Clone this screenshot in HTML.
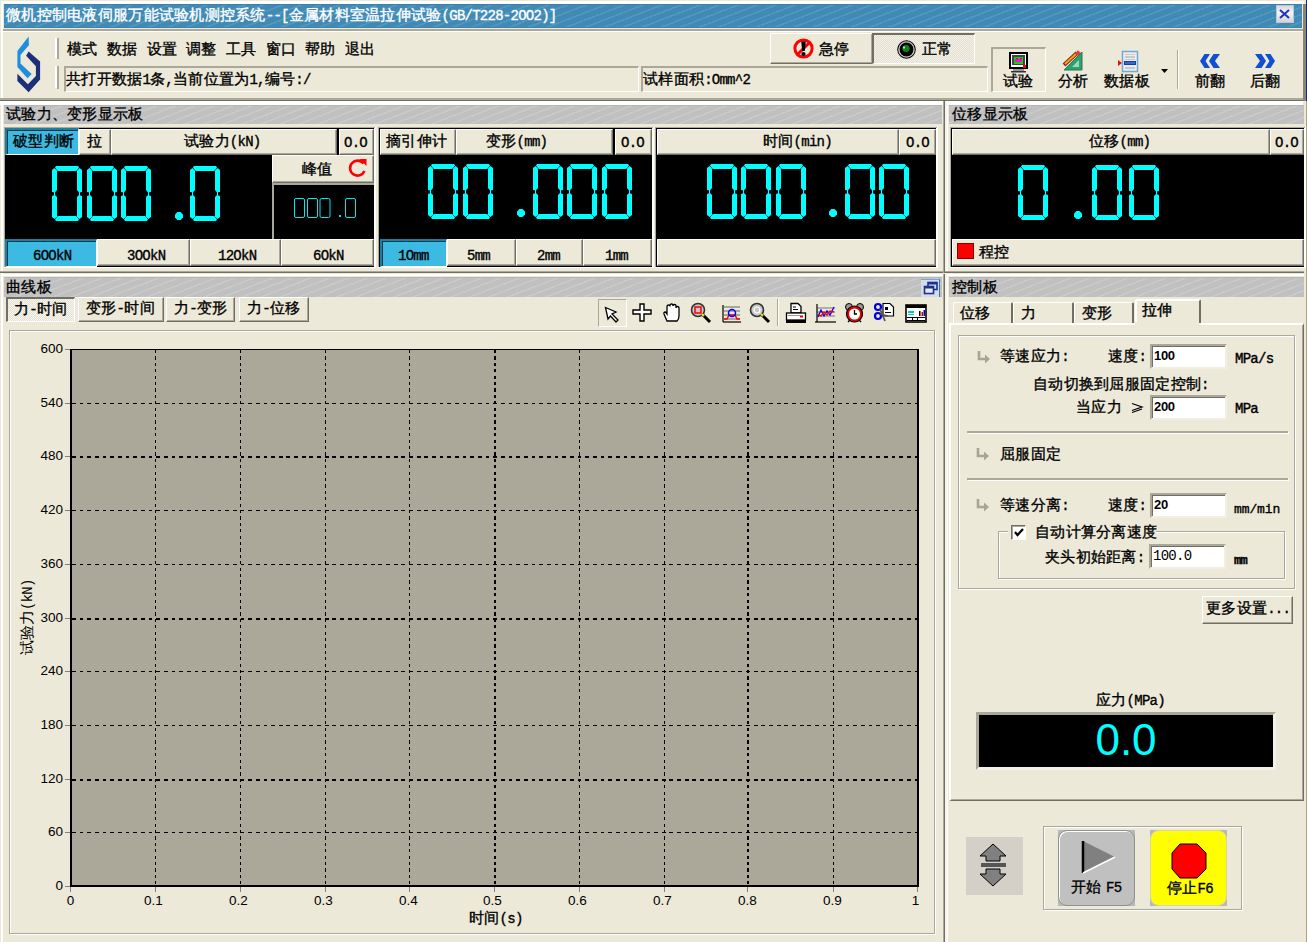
<!DOCTYPE html>
<html><head><meta charset="utf-8">
<style>
*{margin:0;padding:0;box-sizing:border-box}
html,body{width:1307px;height:942px;overflow:hidden;background:#ECE9D8;font-family:"Liberation Sans",sans-serif;font-size:12px;color:#000}
.a{position:absolute}
.t{position:absolute;white-space:nowrap;line-height:12px;font-size:12px}
.raised{background:#ECE9D8;border-top:1px solid #fff;border-left:1px solid #fff;border-right:1px solid #716F64;border-bottom:1px solid #716F64;box-shadow:inset -1px -1px 0 #ACA899}
.sunken{border-top:1px solid #ACA899;border-left:1px solid #ACA899;border-right:1px solid #fff;border-bottom:1px solid #fff}
.hdr{background:repeating-linear-gradient(-21deg,#C0C0C0 0 5.2px,#C9C9C9 5.2px 6.8px);box-shadow:inset 0 1px 0 #B6B6B6}
.blk{background:#000}
.btn{position:absolute;background:#ECE9D8;border-top:1px solid #fff;border-left:1px solid #fff;border-right:1px solid #716F64;border-bottom:1px solid #716F64;box-shadow:inset -1px -1px 0 #ACA899;text-align:center;font-size:12px;white-space:nowrap}
.m{font-family:"Liberation Mono",monospace;font-size:14px;letter-spacing:-0.74px}
.c{font-size:15.3px;line-height:16px;letter-spacing:0.28px;-webkit-text-stroke-width:0.35px}
.sel{background:#3DB6E2;border-top:1px solid #716F64;border-left:1px solid #716F64;border-right:1px solid #fff;border-bottom:1px solid #fff;box-shadow:inset 1px 1px 0 #2E6E8A}
</style></head><body>
<!-- window frame -->
<div class="a" style="left:1px;top:1px;width:1303px;height:941px;border-left:2px solid #fff;border-top:3px solid #fff"></div>
<div class="a" style="left:1306px;top:101px;width:1px;height:841px;background:#A8A490"></div>
<div class="a" style="left:1303px;top:4px;width:3px;height:97px;background:#8A8674"></div>
<div class="a" style="left:1306px;top:0;width:1px;height:101px;background:#1A2A6A"></div>
<!-- title bar -->
<div id="title" class="a" style="left:4px;top:4px;width:1298px;height:24px;background:repeating-linear-gradient(-21deg,#428AB4 0 5.2px,#4D99C1 5.2px 6.8px);box-shadow:inset 0 1px 0 #3A80AA,inset 0 -1px 0 #3C84AE"></div>
<div class="t c" style="left:6px;top:7px;color:#fff;-webkit-text-stroke-width:0.35px">微机控制电液伺服万能试验机测控系统<span class="m">--[</span>金属材料室温拉伸试验<span class="m">(GB/T228-2OO2)]</span></div>
<div class="a" style="left:1276px;top:5px;width:18px;height:18px;background:linear-gradient(#D8D8D8,#F4F4F4 40%,#D4D4D4);border:1px solid #B8C8D8"></div>
<svg class="a" style="left:1279px;top:9px" width="12" height="10"><path d="M1,1 L10,9 M10,1 L1,9" stroke="#2233BB" stroke-width="2"/></svg>
<div class="a" style="left:3px;top:29px;width:1300px;height:2px;background:#ACA899"></div>
<div class="a" style="left:3px;top:31px;width:1300px;height:1px;background:#fff"></div>
<!-- toolbar -->
<svg class="a" style="left:0;top:0" width="60" height="100">
<polygon fill="#1E8FDF" points="28.6,36.6 17.4,50.9 17.4,67 27.5,78.2 31.7,74 20.5,63.5 20.5,55.1 28.9,45.3"/>
<polygon fill="#1B2F7A" points="28.6,51.6 40.1,61.4 40.1,79.6 28.6,92.3 17.4,81 17.4,73.7 27.9,84.2 35.9,76.1 35.9,66.3 26.1,55.8"/>
</svg>
<div class="a" style="left:55px;top:38px;width:2px;height:20px;background:#fff"></div>
<div class="a" style="left:57px;top:38px;width:2px;height:21px;background:#ACA899"></div>
<div class="a" style="left:55px;top:66px;width:2px;height:22px;background:#fff"></div>
<div class="a" style="left:57px;top:66px;width:2px;height:23px;background:#ACA899"></div>
<div class="t c" style="left:67px;top:41px;word-spacing:0">模式</div>
<div class="t c" style="left:107px;top:41px">数据</div>
<div class="t c" style="left:147px;top:41px">设置</div>
<div class="t c" style="left:186px;top:41px">调整</div>
<div class="t c" style="left:226px;top:41px">工具</div>
<div class="t c" style="left:266px;top:41px">窗口</div>
<div class="t c" style="left:305px;top:41px">帮助</div>
<div class="t c" style="left:345px;top:41px">退出</div>
<div class="a" style="left:64px;top:66px;width:575px;height:26px;border-top:2px solid #ACA899;border-left:2px solid #ACA899;border-right:1px solid #fff;border-bottom:1px solid #fff"></div>
<div class="t c" style="left:66px;top:71px">共打开数据<span class="m">1</span>条<span class="m">,</span>当前位置为<span class="m">1,</span>编号<span class="m">:/</span></div>
<div class="a" style="left:641px;top:66px;width:347px;height:26px;border-top:2px solid #ACA899;border-left:2px solid #ACA899;border-right:1px solid #fff;border-bottom:1px solid #fff"></div>
<div class="t c" style="left:643px;top:71px">试样面积<span class="m">:Omm^2</span></div>
<div class="btn" style="left:770px;top:33px;width:103px;height:31px"></div>
<svg class="a" style="left:793px;top:38px" width="21" height="21"><circle cx="10.5" cy="10.5" r="8.6" fill="none" stroke="#F00" stroke-width="3"/><line x1="4.5" y1="16.5" x2="16.5" y2="4.5" stroke="#F00" stroke-width="3"/><path d="M8.2,3.5 H12.8 L11.8,13 H9.2 Z" fill="#000"/><circle cx="10.5" cy="16" r="2.1" fill="#000"/></svg>
<div class="t c" style="left:819px;top:41px">急停</div>
<div class="a" style="left:872px;top:33px;width:103px;height:31px;background:repeating-conic-gradient(#F4F2E8 0 25%,#E2DFD0 0 50%) 0 0/2px 2px;border-top:2px solid #716F64;border-left:2px solid #716F64;border-bottom:1px solid #fff;border-right:1px solid #fff"></div>
<svg class="a" style="left:897px;top:40px" width="20" height="20"><circle cx="9.5" cy="9.5" r="9.3" fill="#000"/><circle cx="9.5" cy="9.5" r="7.6" fill="none" stroke="#C8C8C8" stroke-width="1.4"/><circle cx="9.5" cy="9.5" r="6.6" fill="#000"/><circle cx="9" cy="8.5" r="3.6" fill="#0A8A0A"/><rect x="6" y="6.5" width="2" height="2" fill="#E0C0E0"/></svg>
<div class="t c" style="left:922px;top:41px">正常</div>
<!-- right toolbar -->
<div class="a" style="left:991px;top:47px;width:55px;height:45px;border-top:2px solid #ACA899;border-left:2px solid #ACA899;border-right:1px solid #fff;border-bottom:1px solid #fff"></div>
<svg class="a" style="left:1008px;top:51px" width="22" height="23">
<rect x="1" y="1" width="19" height="17" fill="#000"/><rect x="3" y="3" width="15" height="13" fill="#fff"/><rect x="4" y="4" width="13" height="10" fill="#444"/><rect x="6" y="6" width="9" height="7" fill="#00E000"/><rect x="7" y="8" width="7" height="3" fill="#F0F"/><rect x="8" y="7" width="2" height="1" fill="#E00"/><rect x="12" y="7" width="2" height="1" fill="#E00"/><rect x="15" y="14" width="3" height="3" fill="#F00"/>
<rect x="5" y="18" width="11" height="2" fill="#999"/><rect x="3" y="20" width="15" height="1.5" fill="#333"/></svg>
<div class="t c" style="left:1003px;top:73px">试验</div>
<svg class="a" style="left:1062px;top:50px" width="22" height="22">
<polygon points="20,2 20,20 2,20" fill="#2FA070"/><polygon points="17,10 17,17 10,17" fill="#9ED8B8"/><polygon points="20,2 20,20 2,20" fill="none" stroke="#1E7A50" stroke-width="1"/>
<line x1="2" y1="15" x2="15" y2="3" stroke="#8A2A10" stroke-width="4"/><line x1="3" y1="14" x2="14" y2="4" stroke="#F5A020" stroke-width="2"/><rect x="14" y="1" width="4" height="4" fill="#E04040" transform="rotate(45 16 3)"/></svg>
<div class="t c" style="left:1058px;top:73px">分析</div>
<svg class="a" style="left:1116px;top:50px" width="24" height="23">
<rect x="6.5" y="1.5" width="15" height="20" fill="#F0EEE4" stroke="#6FA8DC" stroke-width="1.5"/>
<rect x="9" y="4" width="10" height="1" fill="#C8C8D0"/><rect x="9" y="6" width="10" height="2" fill="#C8C8D0"/><rect x="9" y="9" width="10" height="1" fill="#C8C8D0"/>
<rect x="8" y="11" width="12" height="4" fill="#1040B0"/><rect x="9" y="12.5" width="10" height="1" fill="#6090E0"/><rect x="9" y="17" width="10" height="2" fill="#C8C8D0"/>
<polygon points="2,10 6,13 2,16" fill="#E01010"/></svg>
<div class="t c" style="left:1104px;top:73px">数据板</div>
<svg class="a" style="left:1160px;top:68px" width="9" height="6"><polygon points="1,1 8,1 4.5,5" fill="#000"/></svg>
<div class="a" style="left:1177px;top:50px;width:1px;height:39px;background:#ACA899"></div>
<div class="a" style="left:1178px;top:50px;width:1px;height:39px;background:#fff"></div>
<svg class="a" style="left:1199px;top:53px" width="22" height="17"><g fill="#1050D0"><polygon points="1,8 5.5,1 11,1 6.5,8 11,15 5.5,15"/><polygon points="10,8 14.5,1 21,1 16,8 21,15 14.5,15"/></g></svg>
<div class="t c" style="left:1195px;top:73px">前翻</div>
<svg class="a" style="left:1254px;top:53px" width="22" height="17"><g fill="#1050D0"><polygon points="21,8 16.5,1 11,1 15.5,8 11,15 16.5,15"/><polygon points="12,8 7.5,1 1,1 6,8 1,15 7.5,15"/></g></svg>
<div class="t c" style="left:1250px;top:73px">后翻</div>
<!-- toolbar bottom line -->
<div class="a" style="left:0;top:98px;width:1303px;height:2px;background:#ACA899"></div>
<div class="a" style="left:0;top:100px;width:1303px;height:1px;background:#716F64"></div>
<div class="a" style="left:0;top:101px;width:1303px;height:4px;background:#fff"></div>

<div class="a" style="left:0px;top:271px;width:943px;height:1px;background:#ACA899;"></div>
<div class="a" style="left:0px;top:272px;width:943px;height:1px;background:#716F64;"></div>
<div class="a" style="left:1px;top:101px;width:1px;height:170px;background:#fff;"></div>
<div class="a" style="left:2px;top:101px;width:1px;height:170px;background:#fff;"></div>
<div class="a" style="left:943px;top:101px;width:1px;height:172px;background:#ACA899;"></div>
<div class="a" style="left:944px;top:101px;width:1px;height:172px;background:#716F64;"></div>
<div class="a" style="left:945px;top:101px;width:2px;height:172px;background:#F6F4EA;"></div>
<div class="a" style="left:947px;top:101px;width:1px;height:172px;background:#fff;"></div>
<div class="a" style="left:945px;top:271px;width:359px;height:1px;background:#ACA899;"></div>
<div class="a" style="left:945px;top:272px;width:359px;height:1px;background:#716F64;"></div>
<div class="a" style="left:1px;top:274px;width:942px;height:2px;background:#fff;"></div>
<div class="a" style="left:945px;top:274px;width:359px;height:2px;background:#fff;"></div>
<div class="a" style="left:1px;top:274px;width:1px;height:668px;background:#fff;"></div>
<div class="a" style="left:2px;top:274px;width:1px;height:668px;background:#fff;"></div>
<div class="a" style="left:943px;top:274px;width:1px;height:668px;background:#ACA899;"></div>
<div class="a" style="left:944px;top:274px;width:1px;height:668px;background:#716F64;"></div>
<div class="a" style="left:945px;top:274px;width:2px;height:668px;background:#F6F4EA;"></div>
<div class="a" style="left:947px;top:274px;width:1px;height:668px;background:#fff;"></div>
<div class="a hdr" style="left:4px;top:105px;width:938px;height:19px"></div>
<div class="t c" style="left:6px;top:106px;">试验力、变形显示板</div>
<div class="a hdr" style="left:949px;top:105px;width:355px;height:19px"></div>
<div class="t c" style="left:952px;top:106px;">位移显示板</div>
<div class="a hdr" style="left:4px;top:277px;width:938px;height:20px"></div>
<div class="t c" style="left:6px;top:279px;">曲线板</div>
<div class="a hdr" style="left:949px;top:277px;width:355px;height:20px"></div>
<div class="t c" style="left:952px;top:279px;">控制板</div>
<div class="a" style="left:4px;top:127px;width:372px;height:141px;background:#fff;"></div>
<div class="a" style="left:4px;top:127px;width:371px;height:1px;background:#ACA899;"></div>
<div class="a" style="left:4px;top:127px;width:1px;height:140px;background:#ACA899;"></div>
<div class="a" style="left:5px;top:128px;width:369px;height:139px;background:#000;"></div>
<div class="a" style="left:5px;top:128px;width:74px;height:27px;background:#3CBAE2;border-top:2px solid #1E7EA0;border-left:2px solid #1E7EA0;border-bottom:1px solid #fff;border-right:1px solid #fff;box-shadow:inset 1px 1px 0 #0E3A4E"></div>
<div class="t c" style="left:13px;top:133px;">破型判断</div>
<div class="btn" style="left:79px;top:129px;width:32px;height:26px;"></div>
<div class="t c" style="left:87px;top:133px;">拉</div>
<div class="btn" style="left:111px;top:129px;width:226px;height:26px;"></div>
<div class="t c" style="left:184px;top:133px;">试验力<span class="m">(kN)</span></div>
<div class="btn" style="left:339px;top:129px;width:35px;height:26px;"></div>
<div class="t c" style="left:344px;top:134px;"><span class="m">O.O</span></div>
<div class="btn" style="left:272px;top:155px;width:102px;height:28px;"></div>
<div class="t c" style="left:302px;top:161px;">峰值</div>
<svg class="a" style="left:347px;top:157px" width="22" height="22"><path d="M16.5,6.5 A7.5,7.5 0 1 0 17.5,14" fill="none" stroke="#F00" stroke-width="2.6"/><polygon points="12.5,2 19.5,2 19.5,9" fill="#F00"/></svg>
<div class="a" style="left:272px;top:183px;width:102px;height:56px;background:#ACA899;"></div>
<div class="a" style="left:274px;top:185px;width:100px;height:54px;background:#000;"></div>
<svg class="a" style="left:290px;top:198px" width="70" height="22"><rect x="4.5" y="0.5" width="10" height="19" rx="1.5" fill="none" stroke="#00E8F0" stroke-width="1"/><rect x="17.5" y="0.5" width="10" height="19" rx="1.5" fill="none" stroke="#00E8F0" stroke-width="1"/><rect x="30.0" y="0.5" width="10" height="19" rx="1.5" fill="none" stroke="#00E8F0" stroke-width="1"/><rect x="55.5" y="0.5" width="10" height="19" rx="1.5" fill="none" stroke="#00E8F0" stroke-width="1"/><rect x="49" y="17" width="2" height="2" fill="#00E8F0"/></svg>
<svg class="a" style="left:52px;top:166px" width="169" height="56" fill="#00FFFF" stroke="#000" stroke-width="0.9" paint-order="stroke"><polygon transform="translate(0,0)" points="4,0 26,0 27,1.5 25,5 5,5 3,1.5"/><polygon transform="translate(0,0)" points="5,50 25,50 27,53.5 26,55 4,55 3,53.5"/><polygon transform="translate(0,0)" points="0,4 2.5,2 5,4.5 5,24 3,26.5 0,26"/><polygon transform="translate(0,0)" points="0,30 3,29 5,31 5,51 2.5,53 0,51"/><polygon transform="translate(0,0)" points="30,4 27.5,2 25,4.5 25,24 27,26.5 30,26"/><polygon transform="translate(0,0)" points="30,30 27,29 25,31 25,51 27.5,53 30,51"/><rect x="2" y="25" width="1" height="6" stroke="none"/><rect x="27" y="25" width="1" height="6" stroke="none"/><polygon transform="translate(35,0)" points="4,0 26,0 27,1.5 25,5 5,5 3,1.5"/><polygon transform="translate(35,0)" points="5,50 25,50 27,53.5 26,55 4,55 3,53.5"/><polygon transform="translate(35,0)" points="0,4 2.5,2 5,4.5 5,24 3,26.5 0,26"/><polygon transform="translate(35,0)" points="0,30 3,29 5,31 5,51 2.5,53 0,51"/><polygon transform="translate(35,0)" points="30,4 27.5,2 25,4.5 25,24 27,26.5 30,26"/><polygon transform="translate(35,0)" points="30,30 27,29 25,31 25,51 27.5,53 30,51"/><rect x="37" y="25" width="1" height="6" stroke="none"/><rect x="62" y="25" width="1" height="6" stroke="none"/><polygon transform="translate(69,0)" points="4,0 26,0 27,1.5 25,5 5,5 3,1.5"/><polygon transform="translate(69,0)" points="5,50 25,50 27,53.5 26,55 4,55 3,53.5"/><polygon transform="translate(69,0)" points="0,4 2.5,2 5,4.5 5,24 3,26.5 0,26"/><polygon transform="translate(69,0)" points="0,30 3,29 5,31 5,51 2.5,53 0,51"/><polygon transform="translate(69,0)" points="30,4 27.5,2 25,4.5 25,24 27,26.5 30,26"/><polygon transform="translate(69,0)" points="30,30 27,29 25,31 25,51 27.5,53 30,51"/><rect x="71" y="25" width="1" height="6" stroke="none"/><rect x="96" y="25" width="1" height="6" stroke="none"/><polygon transform="translate(138,0)" points="4,0 26,0 27,1.5 25,5 5,5 3,1.5"/><polygon transform="translate(138,0)" points="5,50 25,50 27,53.5 26,55 4,55 3,53.5"/><polygon transform="translate(138,0)" points="0,4 2.5,2 5,4.5 5,24 3,26.5 0,26"/><polygon transform="translate(138,0)" points="0,30 3,29 5,31 5,51 2.5,53 0,51"/><polygon transform="translate(138,0)" points="30,4 27.5,2 25,4.5 25,24 27,26.5 30,26"/><polygon transform="translate(138,0)" points="30,30 27,29 25,31 25,51 27.5,53 30,51"/><rect x="140" y="25" width="1" height="6" stroke="none"/><rect x="165" y="25" width="1" height="6" stroke="none"/><polygon points="125.5,46 128.5,46 131,48.5 131,51.5 128.5,54 125.5,54 123,51.5 123,48.5"/></svg>
<div class="a" style="left:5px;top:239px;width:92px;height:28px;background:#3CBAE2;border-top:2px solid #1E7EA0;border-left:2px solid #1E7EA0;border-bottom:1px solid #fff;border-right:1px solid #fff;box-shadow:inset 1px 1px 0 #0E3A4E"></div>
<div class="t c" style="left:33px;top:247px;"><span class="m">6OOkN</span></div>
<div class="btn" style="left:97px;top:239px;width:93px;height:27px;"></div>
<div class="t c" style="left:127px;top:247px;"><span class="m">3OOkN</span></div>
<div class="btn" style="left:190px;top:239px;width:91px;height:27px;"></div>
<div class="t c" style="left:218px;top:247px;"><span class="m">12OkN</span></div>
<div class="btn" style="left:281px;top:239px;width:93px;height:27px;"></div>
<div class="t c" style="left:313px;top:247px;"><span class="m">6OkN</span></div>
<div class="a" style="left:378px;top:127px;width:276px;height:141px;background:#fff;"></div>
<div class="a" style="left:378px;top:127px;width:275px;height:1px;background:#ACA899;"></div>
<div class="a" style="left:378px;top:127px;width:1px;height:140px;background:#ACA899;"></div>
<div class="a" style="left:379px;top:128px;width:273px;height:139px;background:#000;"></div>
<div class="btn" style="left:380px;top:129px;width:76px;height:26px;"></div>
<div class="t c" style="left:386px;top:133px;">摘引伸计</div>
<div class="btn" style="left:456px;top:129px;width:157px;height:26px;"></div>
<div class="t c" style="left:486px;top:133px;">变形<span class="m">(mm)</span></div>
<div class="btn" style="left:615px;top:129px;width:37px;height:26px;"></div>
<div class="t c" style="left:621px;top:134px;"><span class="m">O.O</span></div>
<svg class="a" style="left:428px;top:164px" width="205" height="56" fill="#00FFFF" stroke="#000" stroke-width="0.9" paint-order="stroke"><polygon transform="translate(0,0)" points="4,0 26,0 27,1.5 25,5 5,5 3,1.5"/><polygon transform="translate(0,0)" points="5,50 25,50 27,53.5 26,55 4,55 3,53.5"/><polygon transform="translate(0,0)" points="0,4 2.5,2 5,4.5 5,24 3,26.5 0,26"/><polygon transform="translate(0,0)" points="0,30 3,29 5,31 5,51 2.5,53 0,51"/><polygon transform="translate(0,0)" points="30,4 27.5,2 25,4.5 25,24 27,26.5 30,26"/><polygon transform="translate(0,0)" points="30,30 27,29 25,31 25,51 27.5,53 30,51"/><rect x="2" y="25" width="1" height="6" stroke="none"/><rect x="27" y="25" width="1" height="6" stroke="none"/><polygon transform="translate(35,0)" points="4,0 26,0 27,1.5 25,5 5,5 3,1.5"/><polygon transform="translate(35,0)" points="5,50 25,50 27,53.5 26,55 4,55 3,53.5"/><polygon transform="translate(35,0)" points="0,4 2.5,2 5,4.5 5,24 3,26.5 0,26"/><polygon transform="translate(35,0)" points="0,30 3,29 5,31 5,51 2.5,53 0,51"/><polygon transform="translate(35,0)" points="30,4 27.5,2 25,4.5 25,24 27,26.5 30,26"/><polygon transform="translate(35,0)" points="30,30 27,29 25,31 25,51 27.5,53 30,51"/><rect x="37" y="25" width="1" height="6" stroke="none"/><rect x="62" y="25" width="1" height="6" stroke="none"/><polygon transform="translate(105,0)" points="4,0 26,0 27,1.5 25,5 5,5 3,1.5"/><polygon transform="translate(105,0)" points="5,50 25,50 27,53.5 26,55 4,55 3,53.5"/><polygon transform="translate(105,0)" points="0,4 2.5,2 5,4.5 5,24 3,26.5 0,26"/><polygon transform="translate(105,0)" points="0,30 3,29 5,31 5,51 2.5,53 0,51"/><polygon transform="translate(105,0)" points="30,4 27.5,2 25,4.5 25,24 27,26.5 30,26"/><polygon transform="translate(105,0)" points="30,30 27,29 25,31 25,51 27.5,53 30,51"/><rect x="107" y="25" width="1" height="6" stroke="none"/><rect x="132" y="25" width="1" height="6" stroke="none"/><polygon transform="translate(139,0)" points="4,0 26,0 27,1.5 25,5 5,5 3,1.5"/><polygon transform="translate(139,0)" points="5,50 25,50 27,53.5 26,55 4,55 3,53.5"/><polygon transform="translate(139,0)" points="0,4 2.5,2 5,4.5 5,24 3,26.5 0,26"/><polygon transform="translate(139,0)" points="0,30 3,29 5,31 5,51 2.5,53 0,51"/><polygon transform="translate(139,0)" points="30,4 27.5,2 25,4.5 25,24 27,26.5 30,26"/><polygon transform="translate(139,0)" points="30,30 27,29 25,31 25,51 27.5,53 30,51"/><rect x="141" y="25" width="1" height="6" stroke="none"/><rect x="166" y="25" width="1" height="6" stroke="none"/><polygon transform="translate(174,0)" points="4,0 26,0 27,1.5 25,5 5,5 3,1.5"/><polygon transform="translate(174,0)" points="5,50 25,50 27,53.5 26,55 4,55 3,53.5"/><polygon transform="translate(174,0)" points="0,4 2.5,2 5,4.5 5,24 3,26.5 0,26"/><polygon transform="translate(174,0)" points="0,30 3,29 5,31 5,51 2.5,53 0,51"/><polygon transform="translate(174,0)" points="30,4 27.5,2 25,4.5 25,24 27,26.5 30,26"/><polygon transform="translate(174,0)" points="30,30 27,29 25,31 25,51 27.5,53 30,51"/><rect x="176" y="25" width="1" height="6" stroke="none"/><rect x="201" y="25" width="1" height="6" stroke="none"/><polygon points="91.5,45 94.5,45 97,47.5 97,50.5 94.5,53 91.5,53 89,50.5 89,47.5"/></svg>
<div class="a" style="left:380px;top:239px;width:67px;height:28px;background:#3CBAE2;border-top:2px solid #1E7EA0;border-left:2px solid #1E7EA0;border-bottom:1px solid #fff;border-right:1px solid #fff;box-shadow:inset 1px 1px 0 #0E3A4E"></div>
<div class="t c" style="left:398px;top:247px;"><span class="m">1Omm</span></div>
<div class="btn" style="left:447px;top:239px;width:69px;height:27px;"></div>
<div class="t c" style="left:467px;top:247px;"><span class="m">5mm</span></div>
<div class="btn" style="left:516px;top:239px;width:67px;height:27px;"></div>
<div class="t c" style="left:537px;top:247px;"><span class="m">2mm</span></div>
<div class="btn" style="left:583px;top:239px;width:69px;height:27px;"></div>
<div class="t c" style="left:605px;top:247px;"><span class="m">1mm</span></div>
<div class="a" style="left:655px;top:127px;width:283px;height:141px;background:#fff;"></div>
<div class="a" style="left:655px;top:127px;width:282px;height:1px;background:#ACA899;"></div>
<div class="a" style="left:655px;top:127px;width:1px;height:140px;background:#ACA899;"></div>
<div class="a" style="left:656px;top:128px;width:280px;height:139px;background:#000;"></div>
<div class="btn" style="left:657px;top:129px;width:242px;height:26px;"></div>
<div class="t c" style="left:763px;top:133px;">时间<span class="m">(min)</span></div>
<div class="btn" style="left:899px;top:129px;width:37px;height:26px;"></div>
<div class="t c" style="left:906px;top:134px;"><span class="m">O.O</span></div>
<svg class="a" style="left:707px;top:164px" width="203" height="56" fill="#00FFFF" stroke="#000" stroke-width="0.9" paint-order="stroke"><polygon transform="translate(0,0)" points="4,0 26,0 27,1.5 25,5 5,5 3,1.5"/><polygon transform="translate(0,0)" points="5,50 25,50 27,53.5 26,55 4,55 3,53.5"/><polygon transform="translate(0,0)" points="0,4 2.5,2 5,4.5 5,24 3,26.5 0,26"/><polygon transform="translate(0,0)" points="0,30 3,29 5,31 5,51 2.5,53 0,51"/><polygon transform="translate(0,0)" points="30,4 27.5,2 25,4.5 25,24 27,26.5 30,26"/><polygon transform="translate(0,0)" points="30,30 27,29 25,31 25,51 27.5,53 30,51"/><rect x="2" y="25" width="1" height="6" stroke="none"/><rect x="27" y="25" width="1" height="6" stroke="none"/><polygon transform="translate(34,0)" points="4,0 26,0 27,1.5 25,5 5,5 3,1.5"/><polygon transform="translate(34,0)" points="5,50 25,50 27,53.5 26,55 4,55 3,53.5"/><polygon transform="translate(34,0)" points="0,4 2.5,2 5,4.5 5,24 3,26.5 0,26"/><polygon transform="translate(34,0)" points="0,30 3,29 5,31 5,51 2.5,53 0,51"/><polygon transform="translate(34,0)" points="30,4 27.5,2 25,4.5 25,24 27,26.5 30,26"/><polygon transform="translate(34,0)" points="30,30 27,29 25,31 25,51 27.5,53 30,51"/><rect x="36" y="25" width="1" height="6" stroke="none"/><rect x="61" y="25" width="1" height="6" stroke="none"/><polygon transform="translate(69,0)" points="4,0 26,0 27,1.5 25,5 5,5 3,1.5"/><polygon transform="translate(69,0)" points="5,50 25,50 27,53.5 26,55 4,55 3,53.5"/><polygon transform="translate(69,0)" points="0,4 2.5,2 5,4.5 5,24 3,26.5 0,26"/><polygon transform="translate(69,0)" points="0,30 3,29 5,31 5,51 2.5,53 0,51"/><polygon transform="translate(69,0)" points="30,4 27.5,2 25,4.5 25,24 27,26.5 30,26"/><polygon transform="translate(69,0)" points="30,30 27,29 25,31 25,51 27.5,53 30,51"/><rect x="71" y="25" width="1" height="6" stroke="none"/><rect x="96" y="25" width="1" height="6" stroke="none"/><polygon transform="translate(138,0)" points="4,0 26,0 27,1.5 25,5 5,5 3,1.5"/><polygon transform="translate(138,0)" points="5,50 25,50 27,53.5 26,55 4,55 3,53.5"/><polygon transform="translate(138,0)" points="0,4 2.5,2 5,4.5 5,24 3,26.5 0,26"/><polygon transform="translate(138,0)" points="0,30 3,29 5,31 5,51 2.5,53 0,51"/><polygon transform="translate(138,0)" points="30,4 27.5,2 25,4.5 25,24 27,26.5 30,26"/><polygon transform="translate(138,0)" points="30,30 27,29 25,31 25,51 27.5,53 30,51"/><rect x="140" y="25" width="1" height="6" stroke="none"/><rect x="165" y="25" width="1" height="6" stroke="none"/><polygon transform="translate(172,0)" points="4,0 26,0 27,1.5 25,5 5,5 3,1.5"/><polygon transform="translate(172,0)" points="5,50 25,50 27,53.5 26,55 4,55 3,53.5"/><polygon transform="translate(172,0)" points="0,4 2.5,2 5,4.5 5,24 3,26.5 0,26"/><polygon transform="translate(172,0)" points="0,30 3,29 5,31 5,51 2.5,53 0,51"/><polygon transform="translate(172,0)" points="30,4 27.5,2 25,4.5 25,24 27,26.5 30,26"/><polygon transform="translate(172,0)" points="30,30 27,29 25,31 25,51 27.5,53 30,51"/><rect x="174" y="25" width="1" height="6" stroke="none"/><rect x="199" y="25" width="1" height="6" stroke="none"/><polygon points="124.5,45 127.5,45 130,47.5 130,50.5 127.5,53 124.5,53 122,50.5 122,47.5"/></svg>
<div class="btn" style="left:657px;top:239px;width:279px;height:27px;"></div>
<div class="a" style="left:950px;top:127px;width:356px;height:141px;background:#fff;"></div>
<div class="a" style="left:950px;top:127px;width:355px;height:1px;background:#ACA899;"></div>
<div class="a" style="left:950px;top:127px;width:1px;height:140px;background:#ACA899;"></div>
<div class="a" style="left:951px;top:128px;width:353px;height:139px;background:#000;"></div>
<div class="btn" style="left:952px;top:129px;width:318px;height:26px;"></div>
<div class="t c" style="left:1089px;top:133px;">位移<span class="m">(mm)</span></div>
<div class="btn" style="left:1270px;top:129px;width:34px;height:26px;"></div>
<div class="t c" style="left:1275px;top:134px;"><span class="m">O.O</span></div>
<svg class="a" style="left:1018px;top:165px" width="142" height="56" fill="#00FFFF" stroke="#000" stroke-width="0.9" paint-order="stroke"><polygon transform="translate(0,0)" points="4,0 26,0 27,1.5 25,5 5,5 3,1.5"/><polygon transform="translate(0,0)" points="5,50 25,50 27,53.5 26,55 4,55 3,53.5"/><polygon transform="translate(0,0)" points="0,4 2.5,2 5,4.5 5,24 3,26.5 0,26"/><polygon transform="translate(0,0)" points="0,30 3,29 5,31 5,51 2.5,53 0,51"/><polygon transform="translate(0,0)" points="30,4 27.5,2 25,4.5 25,24 27,26.5 30,26"/><polygon transform="translate(0,0)" points="30,30 27,29 25,31 25,51 27.5,53 30,51"/><rect x="2" y="25" width="1" height="6" stroke="none"/><rect x="27" y="25" width="1" height="6" stroke="none"/><polygon transform="translate(74,0)" points="4,0 26,0 27,1.5 25,5 5,5 3,1.5"/><polygon transform="translate(74,0)" points="5,50 25,50 27,53.5 26,55 4,55 3,53.5"/><polygon transform="translate(74,0)" points="0,4 2.5,2 5,4.5 5,24 3,26.5 0,26"/><polygon transform="translate(74,0)" points="0,30 3,29 5,31 5,51 2.5,53 0,51"/><polygon transform="translate(74,0)" points="30,4 27.5,2 25,4.5 25,24 27,26.5 30,26"/><polygon transform="translate(74,0)" points="30,30 27,29 25,31 25,51 27.5,53 30,51"/><rect x="76" y="25" width="1" height="6" stroke="none"/><rect x="101" y="25" width="1" height="6" stroke="none"/><polygon transform="translate(111,0)" points="4,0 26,0 27,1.5 25,5 5,5 3,1.5"/><polygon transform="translate(111,0)" points="5,50 25,50 27,53.5 26,55 4,55 3,53.5"/><polygon transform="translate(111,0)" points="0,4 2.5,2 5,4.5 5,24 3,26.5 0,26"/><polygon transform="translate(111,0)" points="0,30 3,29 5,31 5,51 2.5,53 0,51"/><polygon transform="translate(111,0)" points="30,4 27.5,2 25,4.5 25,24 27,26.5 30,26"/><polygon transform="translate(111,0)" points="30,30 27,29 25,31 25,51 27.5,53 30,51"/><rect x="113" y="25" width="1" height="6" stroke="none"/><rect x="138" y="25" width="1" height="6" stroke="none"/><polygon points="58.5,46 61.5,46 64,48.5 64,51.5 61.5,54 58.5,54 56,51.5 56,48.5"/></svg>
<div class="btn" style="left:952px;top:239px;width:352px;height:27px;"></div>
<div class="a" style="left:957px;top:243px;width:17px;height:16px;background:#F00;border:1px solid #800"></div>
<div class="t c" style="left:979px;top:244px;">程控</div>
<div class="a" style="left:6px;top:297px;width:69px;height:25px;background:repeating-conic-gradient(#F8F6EE 0 25%,#E4E1D2 0 50%) 0 0/2px 2px;border-top:2px solid #716F64;border-left:2px solid #716F64;border-bottom:1px solid #fff;border-right:1px solid #fff"></div>
<div class="t c" style="left:14px;top:301px;">力<span class="m">-</span>时间</div>
<div class="btn" style="left:78px;top:297px;width:86px;height:25px;"></div>
<div class="t c" style="left:86px;top:300px;">变形<span class="m">-</span>时间</div>
<div class="btn" style="left:166px;top:297px;width:69px;height:25px;"></div>
<div class="t c" style="left:174px;top:300px;">力<span class="m">-</span>变形</div>
<div class="btn" style="left:239px;top:297px;width:70px;height:25px;"></div>
<div class="t c" style="left:247px;top:300px;">力<span class="m">-</span>位移</div>
<div class="a" style="left:598px;top:299px;width:29px;height:28px;border-top:1px solid #ACA899;border-left:1px solid #ACA899;border-bottom:1px solid #fff;border-right:1px solid #fff"></div>
<svg class="a" style="left:604px;top:306px" width="20" height="18"><polygon points="1.5,1.5 12,6 8,8 14,14 12,16 6.5,10 4,13" fill="#fff" stroke="#000" stroke-width="1.3"/></svg>
<svg class="a" style="left:631px;top:303px" width="22" height="20"><path d="M9,1 H13 V7 H20 V11 H13 V18 H9 V11 H2 V7 H9 Z" fill="#fff" stroke="#000" stroke-width="1.4"/></svg>
<svg class="a" style="left:662px;top:303px" width="20" height="20"><path d="M5,18 L2,11 Q1.5,9 3.5,9 L5,11 V3.5 Q5,2 6.5,2 Q8,2 8,3.5 V2.5 Q8,1 9.5,1 Q11,1 11,2.5 V3 Q11,1.5 12.5,1.5 Q14,1.5 14,3 V5 Q14,3.5 15.5,3.5 Q17,3.5 17,5 V13 Q17,16 15,18 Z" fill="#fff" stroke="#000" stroke-width="1.3"/></svg>
<svg class="a" style="left:690px;top:302px" width="23" height="22"><circle cx="8" cy="8" r="6.5" fill="#C8C8C8" stroke="#333" stroke-width="1.6"/><rect x="5" y="5" width="6" height="6" fill="none" stroke="#F00" stroke-width="1.5"/><line x1="13" y1="13" x2="20" y2="20" stroke="#000" stroke-width="3"/><line x1="12" y1="12" x2="14" y2="14" stroke="#EE0" stroke-width="2"/></svg>
<svg class="a" style="left:720px;top:303px" width="22" height="21"><g stroke="#777" stroke-width="1.2"><line x1="4" y1="4" x2="20" y2="4"/><line x1="4" y1="8" x2="20" y2="8"/><line x1="4" y1="12" x2="20" y2="12"/><line x1="4" y1="16" x2="20" y2="16"/></g><line x1="3" y1="2" x2="3" y2="19" stroke="#000" stroke-width="1.2"/><line x1="3" y1="19" x2="21" y2="19" stroke="#000" stroke-width="1.2"/><path d="M4,16 H7 L9,12 H15 L17,16 H20" fill="none" stroke="#F00" stroke-width="1.5"/><circle cx="12" cy="10" r="3.5" fill="none" stroke="#00F" stroke-width="1.5"/></svg>
<svg class="a" style="left:749px;top:302px" width="23" height="22"><circle cx="8" cy="8" r="6.5" fill="#C8C8C8" stroke="#333" stroke-width="1.6"/><circle cx="8" cy="8" r="3" fill="none" stroke="#fff" stroke-width="1.2"/><line x1="13" y1="13" x2="20" y2="20" stroke="#000" stroke-width="3"/><line x1="12" y1="12" x2="14" y2="14" stroke="#EE0" stroke-width="2"/></svg>
<div class="a" style="left:777px;top:299px;width:1px;height:27px;background:#ACA899;"></div>
<div class="a" style="left:778px;top:299px;width:1px;height:27px;background:#fff;"></div>
<svg class="a" style="left:785px;top:302px" width="23" height="22"><path d="M6,1.5 H13 L16,4.5 V11 H6 Z" fill="#fff" stroke="#000" stroke-width="1.3"/><line x1="8" y1="5" x2="11" y2="5" stroke="#000"/><line x1="8" y1="7.5" x2="13" y2="7.5" stroke="#000"/><rect x="1.5" y="11" width="19" height="7" fill="#fff" stroke="#000" stroke-width="1.3"/><rect x="3" y="13" width="15" height="1" fill="#999"/><rect x="15" y="14" width="3" height="1.5" fill="#E00"/><rect x="1" y="18" width="20" height="3" fill="#000"/></svg>
<svg class="a" style="left:814px;top:303px" width="23" height="21"><g stroke="#888" stroke-width="1.2"><line x1="3" y1="5" x2="21" y2="5"/><line x1="3" y1="9" x2="21" y2="9"/><line x1="3" y1="13" x2="21" y2="13"/></g><line x1="3" y1="1" x2="3" y2="19" stroke="#000" stroke-width="1.2"/><line x1="1" y1="19" x2="22" y2="19" stroke="#000" stroke-width="1.2"/><polyline points="4,14 7,7 10,13 13,8 16,12 20,4" fill="none" stroke="#00F" stroke-width="1.3"/><polyline points="4,11 7,13 10,9 13,12 16,8 20,9" fill="none" stroke="#F00" stroke-width="1.3"/></svg>
<svg class="a" style="left:844px;top:302px" width="22" height="22"><circle cx="5" cy="5" r="3.5" fill="#999" stroke="#000"/><circle cx="16" cy="5" r="3.5" fill="#999" stroke="#000"/><circle cx="10.5" cy="12" r="8" fill="#E00" stroke="#000" stroke-width="1.2"/><circle cx="10.5" cy="12" r="5.5" fill="#fff"/><path d="M10.5,8 V12 H13" stroke="#000" stroke-width="1.3" fill="none"/><line x1="4" y1="20" x2="6" y2="18" stroke="#000" stroke-width="1.5"/><line x1="17" y1="20" x2="15" y2="18" stroke="#000" stroke-width="1.5"/></svg>
<svg class="a" style="left:873px;top:302px" width="22" height="22"><path d="M10,1.5 H17 L20.5,5 V14 H10 Z" fill="#fff" stroke="#000" stroke-width="1.2"/><rect x="12" y="5" width="3" height="3" fill="#000"/><rect x="12" y="10" width="6" height="1" fill="#000"/><circle cx="5" cy="5" r="3" fill="none" stroke="#0000E0" stroke-width="2.2"/><circle cx="5" cy="14" r="3" fill="none" stroke="#0000E0" stroke-width="2.2"/><line x1="7" y1="7" x2="12" y2="19" stroke="#555" stroke-width="1.8"/><line x1="7" y1="12" x2="15" y2="14" stroke="#555" stroke-width="1.8"/></svg>
<svg class="a" style="left:905px;top:304px" width="22" height="19"><rect x="1" y="1" width="20" height="17" fill="#fff" stroke="#000" stroke-width="1.6"/><rect x="1" y="1" width="20" height="3" fill="#000"/><rect x="3" y="7" width="6" height="2" fill="#0CC"/><rect x="3" y="10" width="6" height="1" fill="#0CC"/><rect x="14" y="7" width="1.5" height="5" fill="#000"/><rect x="16.5" y="8" width="1.5" height="4" fill="#D00"/><rect x="18.5" y="6" width="1.5" height="6" fill="#00D"/><g fill="#000"><rect x="2" y="13" width="18" height="1"/><rect x="2" y="16" width="18" height="1"/><rect x="7" y="13" width="1" height="4"/><rect x="12" y="13" width="1" height="4"/></g></svg>
<div class="a" style="left:921px;top:279px;width:19px;height:18px;background:#D4DCE8;border-top:1px solid #6FA8DC;border-right:1px solid #2E6FD0"></div>
<svg class="a" style="left:923px;top:281px" width="16" height="14"><rect x="5" y="1.5" width="9" height="7" fill="none" stroke="#203090" stroke-width="1.6"/><rect x="5" y="1" width="9" height="2.5" fill="#203090"/><rect x="1.5" y="5.5" width="9" height="7" fill="#E8ECF4" stroke="#203090" stroke-width="1.6"/><rect x="1.5" y="5" width="9" height="2.5" fill="#203090"/></svg>
<div class="a" style="left:10px;top:331px;width:926px;height:604px;border:1px solid #fff"></div>
<div class="a" style="left:9px;top:330px;width:926px;height:604px;border:1px solid #ACA899"></div>
<svg class="a" style="left:0;top:0" width="940" height="940" shape-rendering="crispEdges"><rect x="70" y="349" width="848" height="537" fill="#ACA899"/><line x1="155.5" y1="350" x2="155.5" y2="886" stroke="#000" stroke-width="1" stroke-dasharray="3.2 3.2"/><line x1="240.5" y1="350" x2="240.5" y2="886" stroke="#000" stroke-width="1" stroke-dasharray="3.2 3.2"/><line x1="325.5" y1="350" x2="325.5" y2="886" stroke="#000" stroke-width="1" stroke-dasharray="3.2 3.2"/><line x1="409.5" y1="350" x2="409.5" y2="886" stroke="#000" stroke-width="1" stroke-dasharray="3.2 3.2"/><line x1="495" y1="350" x2="495" y2="886" stroke="#000" stroke-width="2" stroke-dasharray="3.2 3.2"/><line x1="579.5" y1="350" x2="579.5" y2="886" stroke="#000" stroke-width="1" stroke-dasharray="3.2 3.2"/><line x1="664.5" y1="350" x2="664.5" y2="886" stroke="#000" stroke-width="1" stroke-dasharray="3.2 3.2"/><line x1="748" y1="350" x2="748" y2="886" stroke="#000" stroke-width="2" stroke-dasharray="3.2 3.2"/><line x1="833.5" y1="350" x2="833.5" y2="886" stroke="#000" stroke-width="1" stroke-dasharray="3.2 3.2"/><line x1="72" y1="403.5" x2="918" y2="403.5" stroke="#000" stroke-width="1" stroke-dasharray="3.8 3.86"/><line x1="72" y1="457" x2="918" y2="457" stroke="#000" stroke-width="2" stroke-dasharray="3.8 3.86"/><line x1="72" y1="510.5" x2="918" y2="510.5" stroke="#000" stroke-width="1" stroke-dasharray="3.8 3.86"/><line x1="72" y1="564.5" x2="918" y2="564.5" stroke="#000" stroke-width="1" stroke-dasharray="3.8 3.86"/><line x1="72" y1="619" x2="918" y2="619" stroke="#000" stroke-width="2" stroke-dasharray="3.8 3.86"/><line x1="72" y1="671.5" x2="918" y2="671.5" stroke="#000" stroke-width="1" stroke-dasharray="3.8 3.86"/><line x1="72" y1="725.5" x2="918" y2="725.5" stroke="#000" stroke-width="1" stroke-dasharray="3.8 3.86"/><line x1="72" y1="780" x2="918" y2="780" stroke="#000" stroke-width="2" stroke-dasharray="3.8 3.86"/><line x1="72" y1="832.5" x2="918" y2="832.5" stroke="#000" stroke-width="1" stroke-dasharray="3.8 3.86"/><rect x="70" y="349" width="2" height="538" fill="#000"/><rect x="70" y="349" width="849" height="1" fill="#000"/><rect x="917" y="349" width="2" height="538" fill="#000"/><rect x="70" y="885" width="849" height="2" fill="#000"/><line x1="65" y1="349.5" x2="70" y2="349.5" stroke="#808080" stroke-width="1"/><line x1="70.5" y1="887" x2="70.5" y2="892" stroke="#808080" stroke-width="1"/><line x1="65" y1="403.5" x2="70" y2="403.5" stroke="#808080" stroke-width="1"/><line x1="155.5" y1="887" x2="155.5" y2="892" stroke="#808080" stroke-width="1"/><line x1="65" y1="456.5" x2="70" y2="456.5" stroke="#808080" stroke-width="1"/><line x1="240.5" y1="887" x2="240.5" y2="892" stroke="#808080" stroke-width="1"/><line x1="65" y1="510.5" x2="70" y2="510.5" stroke="#808080" stroke-width="1"/><line x1="325.5" y1="887" x2="325.5" y2="892" stroke="#808080" stroke-width="1"/><line x1="65" y1="564.5" x2="70" y2="564.5" stroke="#808080" stroke-width="1"/><line x1="409.5" y1="887" x2="409.5" y2="892" stroke="#808080" stroke-width="1"/><line x1="65" y1="618.5" x2="70" y2="618.5" stroke="#808080" stroke-width="1"/><line x1="494.5" y1="887" x2="494.5" y2="892" stroke="#808080" stroke-width="1"/><line x1="65" y1="671.5" x2="70" y2="671.5" stroke="#808080" stroke-width="1"/><line x1="579.5" y1="887" x2="579.5" y2="892" stroke="#808080" stroke-width="1"/><line x1="65" y1="725.5" x2="70" y2="725.5" stroke="#808080" stroke-width="1"/><line x1="664.5" y1="887" x2="664.5" y2="892" stroke="#808080" stroke-width="1"/><line x1="65" y1="779.5" x2="70" y2="779.5" stroke="#808080" stroke-width="1"/><line x1="747.5" y1="887" x2="747.5" y2="892" stroke="#808080" stroke-width="1"/><line x1="65" y1="832.5" x2="70" y2="832.5" stroke="#808080" stroke-width="1"/><line x1="833.5" y1="887" x2="833.5" y2="892" stroke="#808080" stroke-width="1"/><line x1="65" y1="886.5" x2="70" y2="886.5" stroke="#808080" stroke-width="1"/><line x1="917.5" y1="887" x2="917.5" y2="892" stroke="#808080" stroke-width="1"/></svg>
<div class="a" style="left:0;top:341px;width:63px;text-align:right;font-size:13.5px;line-height:16px">600</div>
<div class="a" style="left:0;top:395px;width:63px;text-align:right;font-size:13.5px;line-height:16px">540</div>
<div class="a" style="left:0;top:448px;width:63px;text-align:right;font-size:13.5px;line-height:16px">480</div>
<div class="a" style="left:0;top:502px;width:63px;text-align:right;font-size:13.5px;line-height:16px">420</div>
<div class="a" style="left:0;top:556px;width:63px;text-align:right;font-size:13.5px;line-height:16px">360</div>
<div class="a" style="left:0;top:610px;width:63px;text-align:right;font-size:13.5px;line-height:16px">300</div>
<div class="a" style="left:0;top:663px;width:63px;text-align:right;font-size:13.5px;line-height:16px">240</div>
<div class="a" style="left:0;top:717px;width:63px;text-align:right;font-size:13.5px;line-height:16px">180</div>
<div class="a" style="left:0;top:771px;width:63px;text-align:right;font-size:13.5px;line-height:16px">120</div>
<div class="a" style="left:0;top:824px;width:63px;text-align:right;font-size:13.5px;line-height:16px">60</div>
<div class="a" style="left:0;top:878px;width:63px;text-align:right;font-size:13.5px;line-height:16px">0</div>
<div class="a" style="left:40px;top:894px;width:61px;text-align:center;font-size:13.5px;line-height:13px">0</div>
<div class="a" style="left:123px;top:894px;width:61px;text-align:center;font-size:13.5px;line-height:13px">0.1</div>
<div class="a" style="left:208px;top:894px;width:61px;text-align:center;font-size:13.5px;line-height:13px">0.2</div>
<div class="a" style="left:293px;top:894px;width:61px;text-align:center;font-size:13.5px;line-height:13px">0.3</div>
<div class="a" style="left:378px;top:894px;width:61px;text-align:center;font-size:13.5px;line-height:13px">0.4</div>
<div class="a" style="left:462px;top:894px;width:61px;text-align:center;font-size:13.5px;line-height:13px">0.5</div>
<div class="a" style="left:547px;top:894px;width:61px;text-align:center;font-size:13.5px;line-height:13px">0.6</div>
<div class="a" style="left:632px;top:894px;width:61px;text-align:center;font-size:13.5px;line-height:13px">0.7</div>
<div class="a" style="left:717px;top:894px;width:61px;text-align:center;font-size:13.5px;line-height:13px">0.8</div>
<div class="a" style="left:802px;top:894px;width:61px;text-align:center;font-size:13.5px;line-height:13px">0.9</div>
<div class="a" style="left:885px;top:894px;width:61px;text-align:center;font-size:13.5px;line-height:13px">1</div>
<div class="t c" style="left:469px;top:910px;">时间<span class="m">(s)</span></div>
<div class="a" style="left:19px;top:655px;transform-origin:0 0;transform:rotate(-90deg);white-space:nowrap;font-size:15.3px;line-height:16px">试验力<span class="m">(kN)</span></div>
<div class="a" style="left:953px;top:302px;width:60px;height:22px;border-top:1px solid #fff;border-left:1px solid #fff;border-right:2px solid #716F64;border-radius:2px 2px 0 0"></div>
<div class="t c" style="left:960px;top:305px;">位移</div>
<div class="a" style="left:1013px;top:302px;width:61px;height:22px;border-top:1px solid #fff;border-left:1px solid #fff;border-right:2px solid #716F64;border-radius:2px 2px 0 0"></div>
<div class="t c" style="left:1021px;top:305px;">力</div>
<div class="a" style="left:1074px;top:302px;width:60px;height:22px;border-top:1px solid #fff;border-left:1px solid #fff;border-right:2px solid #716F64;border-radius:2px 2px 0 0"></div>
<div class="t c" style="left:1082px;top:305px;">变形</div>
<div class="a" style="left:1135px;top:299px;width:66px;height:26px;background:#ECE9D8;border-top:2px solid #fff;border-left:2px solid #fff;border-right:2px solid #716F64;border-radius:2px 2px 0 0"></div>
<div class="t c" style="left:1142px;top:302px;">拉伸</div>
<div class="a" style="left:949px;top:323px;width:355px;height:478px;border-top:2px solid #fff;border-left:2px solid #fff;border-right:1px solid #716F64;border-bottom:1px solid #716F64;box-shadow:inset -1px -1px 0 #ACA899"></div>
<div class="a" style="left:1135px;top:322px;width:64px;height:3px;background:#ECE9D8"></div>
<div class="a" style="left:959px;top:336px;width:337px;height:254px;border:1px solid #fff"></div>
<div class="a" style="left:958px;top:335px;width:337px;height:254px;border:1px solid #ACA899"></div>
<svg class="a" style="left:976px;top:350px" width="16" height="14"><path d="M3,1 V9 H10" fill="none" stroke="#A8A498" stroke-width="2.6"/><polygon points="9,4.5 14,9 9,13.5" fill="#A8A498"/></svg>
<div class="t c" style="left:1000px;top:348px;">等速应力<span class="m">:</span></div>
<div class="t c" style="left:1108px;top:348px;">速度<span class="m">:</span></div>
<div class="a" style="left:1150px;top:344px;width:77px;height:25px;background:#fff;border-top:2px solid #ACA899;border-left:2px solid #ACA899;border-bottom:2px solid #F1EFE2;border-right:2px solid #F1EFE2;box-shadow:inset 1px 1px 0 #716F64"></div>
<div class="a" style="left:1154px;top:349px;font-family:'Liberation Sans';font-size:13px;line-height:14px;font-weight:bold;letter-spacing:-0.3px">100</div>
<div class="t c" style="left:1235px;top:350px;"><span class="m" style="-webkit-text-stroke-width:0.4px">MPa/s</span></div>
<div class="t c" style="left:1033px;top:376px;">自动切换到屈服固定控制<span class="m">:</span></div>
<div class="t c" style="left:1076px;top:399px;">当应力</div>
<svg class="a" style="left:1130px;top:402px" width="14" height="12"><path d="M2,1.5 L12,5 L2,8.5 M2,10.5 L12,7" fill="none" stroke="#000" stroke-width="1.25"/></svg>
<div class="a" style="left:1150px;top:395px;width:77px;height:25px;background:#fff;border-top:2px solid #ACA899;border-left:2px solid #ACA899;border-bottom:2px solid #F1EFE2;border-right:2px solid #F1EFE2;box-shadow:inset 1px 1px 0 #716F64"></div>
<div class="a" style="left:1154px;top:400px;font-family:'Liberation Sans';font-size:13px;line-height:14px;font-weight:bold;letter-spacing:-0.3px">200</div>
<div class="t c" style="left:1235px;top:400px;"><span class="m" style="-webkit-text-stroke-width:0.4px">MPa</span></div>
<div class="a" style="left:968px;top:432px;width:321px;height:1px;border:1px solid #fff"></div>
<div class="a" style="left:967px;top:431px;width:321px;height:1px;border:1px solid #ACA899"></div>
<svg class="a" style="left:975px;top:447px" width="16" height="14"><path d="M3,1 V9 H10" fill="none" stroke="#A8A498" stroke-width="2.6"/><polygon points="9,4.5 14,9 9,13.5" fill="#A8A498"/></svg>
<div class="t c" style="left:1000px;top:446px;">屈服固定</div>
<div class="a" style="left:968px;top:479px;width:321px;height:1px;border:1px solid #fff"></div>
<div class="a" style="left:967px;top:478px;width:321px;height:1px;border:1px solid #ACA899"></div>
<svg class="a" style="left:975px;top:498px" width="16" height="14"><path d="M3,1 V9 H10" fill="none" stroke="#A8A498" stroke-width="2.6"/><polygon points="9,4.5 14,9 9,13.5" fill="#A8A498"/></svg>
<div class="t c" style="left:1000px;top:497px;">等速分离<span class="m">:</span></div>
<div class="t c" style="left:1108px;top:497px;">速度<span class="m">:</span></div>
<div class="a" style="left:1150px;top:493px;width:77px;height:25px;background:#fff;border-top:2px solid #ACA899;border-left:2px solid #ACA899;border-bottom:2px solid #F1EFE2;border-right:2px solid #F1EFE2;box-shadow:inset 1px 1px 0 #716F64"></div>
<div class="a" style="left:1154px;top:498px;font-family:'Liberation Sans';font-size:13px;line-height:14px;font-weight:bold;letter-spacing:-0.3px">20</div>
<div class="t c" style="left:1234px;top:500px;"><span class="m" style="font-size:13px;letter-spacing:-0.1px">mm/min</span></div>
<div class="a" style="left:999px;top:532px;width:287px;height:48px;border:1px solid #fff"></div>
<div class="a" style="left:998px;top:531px;width:287px;height:48px;border:1px solid #ACA899"></div>
<div class="a" style="left:1008px;top:524px;width:148px;height:16px;background:#ECE9D8;"></div>
<div class="a" style="left:1011px;top:525px;width:15px;height:15px;background:#fff;border-top:1px solid #716F64;border-left:1px solid #716F64;border-bottom:1px solid #fff;border-right:1px solid #fff;box-shadow:inset 1px 1px 0 #ACA899"></div>
<svg class="a" style="left:1013px;top:527px" width="12" height="11"><path d="M2,5 L4.5,8 L10,2" fill="none" stroke="#000" stroke-width="2.2"/></svg>
<div class="t c" style="left:1035px;top:524px;">自动计算分离速度</div>
<div class="t c" style="left:1045px;top:549px;">夹头初始距离<span class="m">:</span></div>
<div class="a" style="left:1149px;top:544px;width:77px;height:25px;background:#fff;border-top:2px solid #ACA899;border-left:2px solid #ACA899;border-bottom:2px solid #F1EFE2;border-right:2px solid #F1EFE2;box-shadow:inset 1px 1px 0 #716F64"></div>
<div class="a" style="left:1153px;top:549px;font-family:'Liberation Sans';font-size:13px;line-height:14px;font-weight:bold;letter-spacing:-0.3px"><span style="font-family:'Liberation Mono';font-weight:normal;font-size:14px;letter-spacing:-0.74px">100.0</span></div>
<div class="t c" style="left:1234px;top:551px;"><span class="m" style="font-weight:bold;font-size:12px">mm</span></div>
<div class="btn" style="left:1202px;top:596px;width:91px;height:28px;"></div>
<div class="t c" style="left:1206px;top:600px;">更多设置<span class="m">...</span></div>
<div class="t c" style="left:1096px;top:692px;">应力<span class="m">(MPa)</span></div>
<div class="a" style="left:976px;top:712px;width:300px;height:58px;background:#000;border-top:3px solid #ACA899;border-left:3px solid #ACA899;border-bottom:3px solid #F4F2E8;border-right:3px solid #F4F2E8"></div>
<div class="a" style="left:976px;top:716px;width:300px;text-align:center;font-size:44px;line-height:48px;color:#00FFFF">0.0</div>
<div class="a" style="left:966px;top:837px;width:57px;height:58px;background:#D4D0C8;"></div>
<svg class="a" style="left:978px;top:842px" width="31" height="46"><polygon points="15,2 28,14 22,14 22,19 8,19 8,14 2,14" fill="#808080" stroke="#000" stroke-width="1"/><rect x="3" y="21" width="25" height="4" fill="#555"/><polygon points="15,44 28,32 22,32 22,27 8,27 8,32 2,32" fill="#808080" stroke="#000" stroke-width="1"/></svg>
<div class="a" style="left:1044px;top:827px;width:199px;height:84px;border:1px solid #fff"></div>
<div class="a" style="left:1043px;top:826px;width:199px;height:84px;border:1px solid #ACA899"></div>
<div class="a" style="left:1058px;top:830px;width:77px;height:76px;background:#B8B8B8"></div>
<div class="a" style="left:1058px;top:830px;width:77px;height:76px;background:#C0C0C0;border:1px solid #909090;border-radius:9px;box-shadow:inset 1px 1px 0 #fff"></div>
<svg class="a" style="left:1081px;top:839px" width="36" height="36"><polygon points="2,2 34,18 2,34" fill="#808080"/><polyline points="2,34 2,2" stroke="#000" stroke-width="2.5" fill="none"/><polyline points="2,34 34,18" stroke="#fff" stroke-width="1.5" fill="none"/></svg>
<div class="t c" style="left:1071px;top:879px;">开始 <span class="m">F5</span></div>
<div class="a" style="left:1150px;top:830px;width:77px;height:76px;background:#B8B8B8"></div>
<div class="a" style="left:1150px;top:830px;width:77px;height:76px;background:#FFFF00;border:1px solid #D8D8A0;border-radius:9px"></div>
<svg class="a" style="left:1171px;top:843px" width="37" height="36"><polygon points="9,1 26,1 35,10 35,26 26,35 9,35 1,26 1,10" fill="#FF0000" stroke="#000" stroke-width="1"/></svg>
<div class="t c" style="left:1167px;top:880px;">停止<span class="m">F6</span></div></body></html>
